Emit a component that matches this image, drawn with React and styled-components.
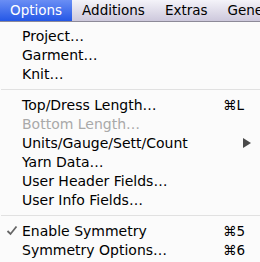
import React from 'react';
import styled, { createGlobalStyle } from 'styled-components';

const GlobalStyle = createGlobalStyle`
  html, body {
    margin: 0;
    padding: 0;
    background: #fbfbfb;
    overflow: hidden;
  }
  body {
    font-family: "DejaVu Sans", "Noto Sans", sans-serif;
  }
`;

const menuTitles = ['Options', 'Additions', 'Extras', 'General'];

const items = [
  { label: 'Project…' },
  { label: 'Garment…' },
  { label: 'Knit…' },
  { sep: true },
  { label: 'Top/Dress Length…', key: '⌘L' },
  { label: 'Bottom Length…', disabled: true },
  { label: 'Units/Gauge/Sett/Count', sub: true },
  { label: 'Yarn Data…' },
  { label: 'User Header Fields…' },
  { label: 'User Info Fields…' },
  { sep: true },
  { label: 'Enable Symmetry', key: '⌘5', checked: true },
  { label: 'Symmetry Options…', key: '⌘6' },
];

export default function App() {
  return (
    <Screen>
      <GlobalStyle />
      <MenuBar>
        {menuTitles.map((t, i) => (
          <MenuTitle key={t} $active={i === 0}>{t}</MenuTitle>
        ))}
      </MenuBar>
      <Menu>
        {items.map((it, i) =>
          it.sep ? (
            <Separator key={i} />
          ) : (
            <Item key={i} $disabled={it.disabled}>
              <Check>
                {it.checked && (
                  <svg width="12" height="11" viewBox="0 0 12 11">
                    <path d="M1.5 6 L4.5 9 L10.5 1.5" fill="none" stroke="#666" strokeWidth="1.8" />
                  </svg>
                )}
              </Check>
              <Label>{it.label}</Label>
              {it.key && <Shortcut>{it.key}</Shortcut>}
              {it.sub && (
                <Arrow>
                  <svg width="8" height="10" viewBox="0 0 8 10">
                    <path d="M0 0 L8 5 L0 10 Z" fill="#4a4a4a" />
                  </svg>
                </Arrow>
              )}
            </Item>
          )
        )}
      </Menu>
    </Screen>
  );
}

const Screen = styled.div`
  width: 260px;
  height: 262px;
  overflow: hidden;
  background: #fbfbfb;
`;

const MenuBar = styled.div`
  display: flex;
  height: 21px;
  border-bottom: 1px solid #8d8a98;
  background: linear-gradient(#f4f3f9, #cdc8dc);
  white-space: nowrap;
  overflow: hidden;
`;

const MenuTitle = styled.div`
  padding: 0 10px;
  font-size: 13.5px;
  line-height: 21px;
  color: ${p => (p.$active ? '#ffffff' : '#000000')};
  background: ${p => (p.$active ? 'linear-gradient(#6a8ef4, #2457e6)' : 'transparent')};
`;

const Menu = styled.div`
  display: flex;
  flex-direction: column;
  padding-top: 4px;
`;

const Item = styled.div`
  display: flex;
  align-items: center;
  height: 19px;
  font-size: 14px;
  color: ${p => (p.$disabled ? '#a9a9a9' : '#000000')};
`;

const Check = styled.div`
  width: 22px;
  display: flex;
  justify-content: center;
  padding-left: 2px;
  box-sizing: border-box;
`;

const Label = styled.span`
  flex: 1;
  white-space: nowrap;
`;

const Shortcut = styled.span`
  width: 37px;
  font-size: 13.5px;
`;

const Arrow = styled.span`
  display: flex;
  width: 17px;
`;

const Separator = styled.div`
  height: 12px;
  display: flex;
  align-items: center;
  &::after {
    content: '';
    flex: 1;
    margin-left: 1px;
    height: 1px;
    background: #e1e1e1;
  }
`;
